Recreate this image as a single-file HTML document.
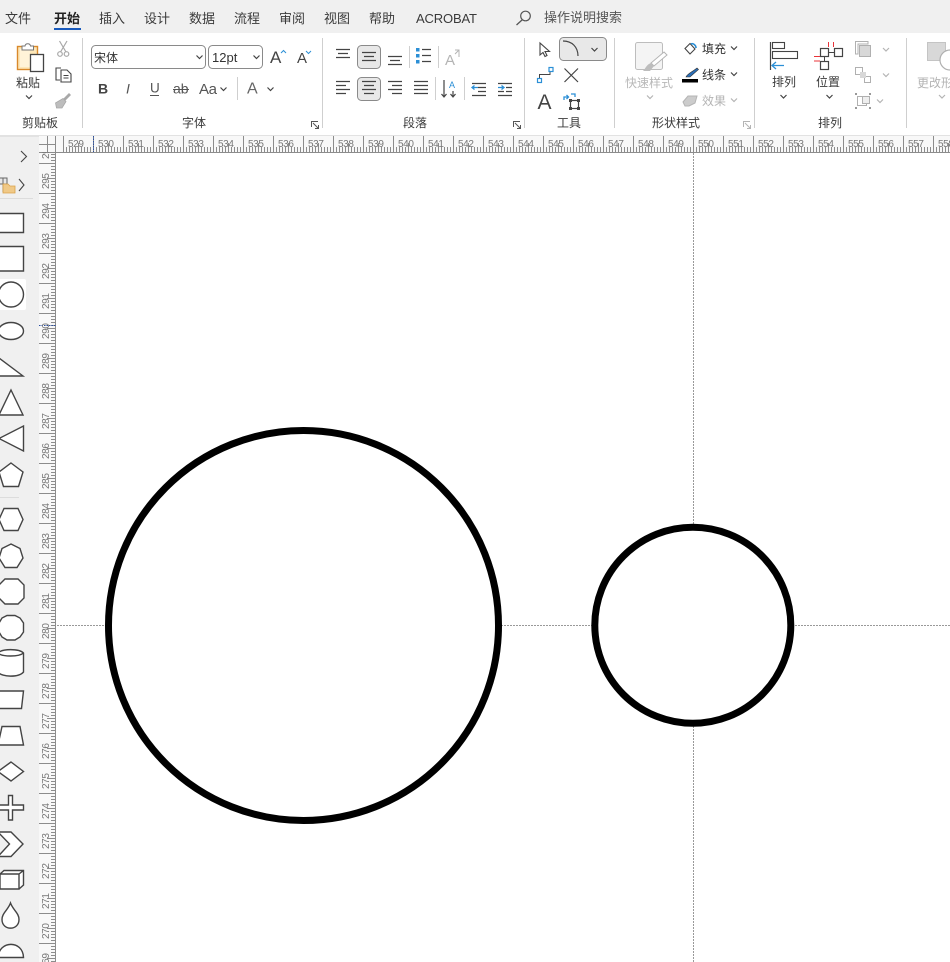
<!DOCTYPE html>
<html><head><meta charset="utf-8"><title>Visio</title>
<style>
html,body{margin:0;padding:0;background:#fff;width:950px;height:962px;overflow:hidden}
svg{display:block}
text{font-family:"Liberation Sans","Noto Sans CJK SC",sans-serif}
.t{font-size:13px;fill:#3a3a3a}
.g{font-size:12px;fill:#3a3a3a;text-anchor:middle}
.d{font-size:12px;fill:#b8b8b8;text-anchor:middle}
.r{font-size:10px;fill:#777;letter-spacing:-.4px}
.l{fill:none;stroke:#444;stroke-width:1.3}
.s{fill:#fff;stroke:#444;stroke-width:1.4}
.b{fill:none;stroke:#2b8fd6;stroke-width:1.3}
.q{fill:none;stroke:#b0b0b0;stroke-width:1.2}
</style></head><body>
<svg width="950" height="962" viewBox="0 0 950 962" xmlns="http://www.w3.org/2000/svg">
<defs>
<path id="ch" d="M-3 -1.5L0 1.5L3 -1.5" fill="none" stroke="#444" stroke-width="1.2"/>
<path id="cg" d="M-3 -1.5L0 1.5L3 -1.5" fill="none" stroke="#b4b4b4" stroke-width="1.2"/>
<pattern id="hr" width="30" height="16" patternUnits="userSpaceOnUse" patternTransform="translate(63 136)">
<path d="M0.5 0V16M3.5 11V16M6.5 11V16M9.5 11V16M12.5 11V16M15.5 7V16M18.5 11V16M21.5 11V16M24.5 11V16M27.5 11V16" stroke="#8c8c8c" stroke-width="1" fill="none"/>
</pattern>
<pattern id="vr" width="17" height="30" patternUnits="userSpaceOnUse" patternTransform="translate(39 643)">
<path d="M0 0.5H17M12 3.5H17M12 6.5H17M12 9.5H17M12 12.5H17M8 15.5H17M12 18.5H17M12 21.5H17M12 24.5H17M12 27.5H17" stroke="#8c8c8c" stroke-width="1" fill="none"/>
</pattern>
<clipPath id="vc"><rect x="39" y="152" width="17" height="810"/></clipPath>
</defs>

<rect width="950" height="962" fill="#fff"/>
<!-- tabs -->
<rect width="950" height="33" fill="#f0f0f0"/>
<text class="t" x="5" y="23">文件</text>
<text class="t" x="54" y="23" style="font-weight:700;fill:#222">开始</text>
<rect x="54" y="28" width="27" height="2" fill="#185abd"/>
<text class="t" x="99" y="23">插入</text>
<text class="t" x="144" y="23">设计</text>
<text class="t" x="189" y="23">数据</text>
<text class="t" x="234" y="23">流程</text>
<text class="t" x="279" y="23">审阅</text>
<text class="t" x="324" y="23">视图</text>
<text class="t" x="369" y="23">帮助</text>
<text class="t" x="416" y="23" textLength="61">ACROBAT</text>
<circle cx="525.5" cy="16" r="4.8" fill="none" stroke="#555" stroke-width="1.2"/>
<path d="M522 20L516.500 25" stroke="#555" stroke-width="1.3"/>
<text class="t" x="544" y="22" style="fill:#555">操作说明搜索</text>

<!-- ribbon -->
<rect x="0" y="135" width="950" height="2" fill="#e2e2e2"/>
<rect x="0" y="33" width="950" height="102" fill="#fff"/>
<g stroke="#cfcfcf" stroke-width="1">
<path d="M82.500 38V128M322.500 38V128M524.500 38V128M614.500 38V128M754.500 38V128M906.500 38V128M237.500 77V100M409.500 46V68M438.500 46V68M435.500 77V100M464.500 77V100"/>
</g>
<!-- group labels -->
<text class="g" x="40" y="127">剪贴板</text>
<text class="g" x="194" y="127">字体</text>
<text class="g" x="415" y="127">段落</text>
<text class="g" x="569" y="127">工具</text>
<text class="g" x="676" y="127">形状样式</text>
<text class="g" x="830" y="127">排列</text>
<g fill="none" stroke="#555" stroke-width="1">
<path d="M311.500 127V121.500H318M313 123L318.500 128.500M318.500 125V128.500H315"/>
<path d="M513.500 127V121.500H520M515 123L520.500 128.500M520.500 125V128.500H517"/>
</g>
<path d="M743.500 127V121.500H750M745 123L750.500 128.500M750.500 125V128.500H747" fill="none" stroke="#b4b4b4"/>

<!-- clipboard -->
<rect x="17.500" y="46.500" width="20" height="23" fill="#fde7b8" stroke="#d9892b" stroke-width="1.4"/>
<rect x="20" y="49" width="10" height="18" fill="#fff3d8"/>
<path d="M22 50V46H25C25.500 43 30 43 30.500 46H33.500V50Z" fill="#fff" stroke="#777" stroke-width="1"/>
<rect x="30.500" y="54.500" width="13" height="17" fill="#fff" stroke="#444" stroke-width="1.3"/>
<text class="g" x="28" y="87">粘贴</text>
<use href="#ch" x="29" y="97"/>
<!-- scissors -->
<g fill="none" stroke="#a8a8a8" stroke-width="1.2">
<path d="M59.500 41L66 52M67 41L60.500 52"/><circle cx="60" cy="54" r="2.300"/><circle cx="66.500" cy="54" r="2.300"/>
</g>
<!-- copy -->
<g fill="none" stroke="#444" stroke-width="1.1">
<path d="M61 68H56V80H60"/>
<path d="M61 70H67L71 74V82H61Z" fill="#fff"/><path d="M63.500 75.500H68.500M63.500 78H68.500"/>
</g>
<!-- brush -->
<path d="M69 93L71 95L65 101L63 99Z" fill="#a8a8a8"/>
<path d="M63 98.500L66 101.500L62 108H56.500L55.500 103Z" fill="#bdbdbd" stroke="#a8a8a8" stroke-width=".8"/>

<!-- font -->
<rect x="91.500" y="45.500" width="114" height="23" rx="4" fill="#fff" stroke="#8a8a8a"/>
<text x="94" y="62" style="font-size:12px;fill:#333">宋体</text>
<use href="#ch" x="199.500" y="57"/>
<rect x="208.500" y="45.500" width="54" height="23" rx="4" fill="#fff" stroke="#8a8a8a"/>
<text x="212" y="62" style="font-size:13px;fill:#333">12pt</text>
<use href="#ch" x="256.500" y="57"/>
<text x="270" y="63" style="font-size:17px;fill:#444">A</text>
<path d="M281 53L283.500 50.500L286 53" fill="none" stroke="#2b8fd6"/>
<text x="297" y="63" style="font-size:15px;fill:#444">A</text>
<path d="M306 51L308.500 53.500L311 51" fill="none" stroke="#2b8fd6"/>
<text x="98" y="93.500" style="font-size:14px;font-weight:700;fill:#444">B</text>
<text x="126" y="93.500" style="font-size:14px;font-style:italic;fill:#555">I</text>
<text x="150" y="92.500" style="font-size:13.500px;fill:#555">U</text>
<path d="M150 95.500H159" stroke="#555"/>
<text x="173" y="93.500" style="font-size:14px;fill:#555">ab</text>
<path d="M173 89.500H189" stroke="#555"/>
<text x="199" y="94" style="font-size:15px;fill:#555" textLength="18">Aa</text>
<use href="#ch" x="223.500" y="89"/>
<text x="247" y="93.500" style="font-size:16px;fill:#666">A</text>
<use href="#ch" x="270.500" y="89"/>

<!-- paragraph -->
<rect x="357.500" y="45.500" width="23" height="23" rx="4" fill="#e8e8e8" stroke="#8a8a8a"/>
<rect x="357.500" y="77.500" width="23" height="23" rx="4" fill="#e8e8e8" stroke="#8a8a8a"/>
<g fill="none" stroke="#444" stroke-width="1.2">
<path d="M336 49.500H350M338 53.500H348M336 57.500H350" transform="translate(0 0)"/>
<path d="M362 52.500H376M364 56.500H374M362 60.500H376"/>
<path d="M388 56.500H402M390 60.500H400M388 64.500H402"/>
<path d="M336 81.500H350M336 85.500H346M336 89.500H350M336 93.500H346"/>
<path d="M362 81.500H376M364 85.500H374M362 89.500H376M364 93.500H374"/>
<path d="M388 81.500H402M392 85.500H402M388 89.500H402M392 93.500H402"/>
<path d="M414 81.500H428M414 85.500H428M414 89.500H428M414 93.500H428"/>
<path d="M422 49.500H431M422 55.500H431M422 61.500H431"/>
<path d="M444 80V97M441.500 94L444 97L446.500 94M453 91V97M450.500 94L453 97L455.500 94"/>
<path d="M472 83.500H486M478 87.500H486M478 91.500H486M472 95.500H486"/>
<path d="M498 83.500H512M498 91.500H504M506 87.500H512M506 91.500H512M498 95.500H512"/>
</g>
<rect x="416" y="48" width="3.500" height="3.500" fill="#2b8fd6"/><rect x="416" y="54" width="3.500" height="3.500" fill="#2b8fd6"/><rect x="416" y="60" width="3.500" height="3.500" fill="#2b8fd6"/>
<text x="445" y="65" style="font-size:15px;fill:#b4b4b4">A</text>
<path d="M459 57V50H455M459 50L455 54" fill="none" stroke="#b4b4b4"/>
<text x="449" y="88" style="font-size:9px;fill:#2b8fd6">A</text>
<path d="M472 87.500H478M474.500 85.500L472 87.500L474.500 89.500" class="b"/>
<path d="M498 87.500H504M501.500 85.500L504 87.500L501.500 89.500" class="b"/>

<!-- tools -->
<path d="M540 43V55L543 52.500L545 56.500L547 55.500L545 51.500H549.500Z" fill="#fff" stroke="#444" stroke-width="1.1"/>
<rect x="559.500" y="37.500" width="47" height="23" rx="4" fill="#e8e8e8" stroke="#8a8a8a"/>
<path d="M563 41C572 41 578 47 578 56" fill="none" stroke="#444" stroke-width="1.2"/>
<use href="#ch" x="594.500" y="49.500"/>
<path d="M539.500 79V74.500H550V70" fill="none" stroke="#444"/>
<rect x="537.500" y="78.500" width="4" height="4" fill="#fff" stroke="#2b8fd6" stroke-width="1.2"/>
<rect x="549" y="67.500" width="4" height="4" fill="#fff" stroke="#2b8fd6" stroke-width="1.2"/>
<path d="M564.500 68.500L578 82M578 68.500L564.500 82" stroke="#444" stroke-width="1.2" fill="none"/>
<text x="537.500" y="109" style="font-size:21px;fill:#444">A</text>
<rect x="570.500" y="100.500" width="8" height="8" fill="none" stroke="#444" stroke-width="1.2"/>
<path d="M569 99h3v3h-3zM577 99h3v3h-3zM569 107h3v3h-3zM577 107h3v3h-3z" fill="#444"/>
<path d="M564 100V97H568M566.500 95L568.500 97L566.500 99M571 94H575V97" class="b" stroke-width="1.1"/>

<!-- quick styles -->
<rect x="635.500" y="42.500" width="27" height="27" rx="2" fill="#f4f4f4" stroke="#bdbdbd"/>
<path d="M664 52L667 55L654 66L651 63Z" fill="#fff" stroke="#b4b4b4"/>
<path d="M651 63L654 66L650 71H643C646 68 646 65 651 63Z" fill="#bdbdbd"/>
<text class="d" x="649" y="87">快速样式</text>
<use href="#cg" x="650" y="97"/>

<!-- fill line effect -->
<path d="M685 48.500L690 43.500L695 49L690 54Z" fill="#fff" stroke="#444" stroke-width="1.1"/>
<path d="M691 44C693 43 696 45 696 48" fill="none" stroke="#2b8fd6" stroke-width="1.6"/>
<text x="702" y="53" style="font-size:12px;fill:#333">填充</text>
<use href="#ch" x="734" y="48"/>
<path d="M697 68L698.500 69.500L690 77H686C687 74 692 72 697 68Z" fill="#2b6fb8" stroke="#333" stroke-width=".6"/>
<rect x="682" y="79" width="16" height="3.500" fill="#000"/>
<text x="702" y="79" style="font-size:12px;fill:#333">线条</text>
<use href="#ch" x="734" y="74"/>
<path d="M683 102L688 96H697L695 103L689 106H685Z" fill="#ccc" stroke="#b4b4b4"/>
<text x="702" y="105" style="font-size:12px;fill:#b4b4b4">效果</text>
<use href="#cg" x="734" y="100"/>

<!-- arrange -->
<path d="M770.500 42V70" stroke="#444" stroke-width="1.2"/>
<rect x="772.500" y="42.500" width="12" height="6" fill="#fff" stroke="#444" stroke-width="1.1"/>
<rect x="772.500" y="51.500" width="25" height="7" fill="#fff" stroke="#444" stroke-width="1.1"/>
<path d="M772 65.500H784M776 62L772 65.500L776 69" class="b"/>
<text class="g" x="784" y="86">排列</text>
<use href="#ch" x="783.500" y="96.500"/>
<g fill="#fff" stroke="#444" stroke-width="1.2">
<rect x="820.500" y="48.500" width="8" height="8"/><rect x="834.500" y="48.500" width="8" height="8"/><rect x="820.500" y="61.500" width="8" height="8"/>
</g>
<path d="M828.500 52.500H834.500M824.500 56.500V61.500" stroke="#444" fill="none"/>
<path d="M828.500 42V47M833.500 42V47M814 56.500H820M814 61H820" stroke="#e8343a" fill="none"/>
<text class="g" x="828" y="86">位置</text>
<use href="#ch" x="829.500" y="96.500"/>
<g fill="#eee" stroke="#b0b0b0" stroke-width="1">
<path d="M855.500 41.500H868V44H858V54H855.500Z" fill="#fff"/>
<rect x="859.500" y="45.500" width="11" height="11" fill="#d8d8d8"/>
<rect x="855.500" y="67.500" width="7" height="7" fill="#fff"/><rect x="864.500" y="76.500" width="6" height="6" fill="#fff"/>
<rect x="860" y="72" width="6" height="6" fill="#d8d8d8" stroke="none"/>
<rect x="857.500" y="96.500" width="9" height="9" fill="#fff"/>
<rect x="862.500" y="96.500" width="7" height="7" fill="#eee"/>
</g>
<path d="M855 93h2v2h-2zM869 93h2v2h-2zM855 107h2v2h-2zM869 107h2v2h-2z" fill="#999"/>
<use href="#cg" x="886" y="49.500"/>
<use href="#cg" x="886" y="75"/>
<use href="#cg" x="880" y="101"/>
<rect x="927.500" y="42.500" width="18" height="18" fill="#d8d8d8" stroke="#c4c4c4"/>
<circle cx="950" cy="60" r="10" fill="#fff" stroke="#b0b0b0" stroke-width="1.2"/>
<text x="917" y="87" style="font-size:12px;fill:#b4b4b4">更改形</text>
<use href="#cg" x="942" y="96.500"/>

<!-- shape panel -->
<rect x="0" y="137" width="39" height="825" fill="#f0f0f0"/>
<path d="M21 151L26.500 156.500L21 162" fill="none" stroke="#444" stroke-width="1.1"/>
<path d="M19 179L24 185L19 191" fill="none" stroke="#444" stroke-width="1.1"/>
<path d="M0 178H7V184H0M3 178V192" fill="#e8e8e8" stroke="#666"/>
<path d="M3 184H8L10 186H15V193H3Z" fill="#f0c987" stroke="#d9a24a" stroke-width=".8"/>
<path d="M0 198.500H33" stroke="#dcdcdc"/>
<path d="M0 497.500H19" stroke="#dcdcdc"/>
<rect x="-3" y="279" width="29" height="31" rx="2" fill="#fff"/>
<g class="s">
<path d="M-2 213.500H23.500V232.500H-2"/>
<path d="M-2 246.500H23.500V271H-2"/>
<circle cx="11" cy="294.500" r="12.500"/>
<ellipse cx="11" cy="331" rx="12.500" ry="8.500"/>
<path d="M-1 358L23 376H-1Z"/>
<path d="M11 390L23 415H-1Z"/>
<path d="M23.500 426V451L-1 438.500Z"/>
<path d="M11 463L23 472L18.500 486.500H3.500L-1 472Z"/>
<path d="M4 508.500H18L23 519.500L18 530.500H4L-1 519.500Z"/>
<path d="M11 544L20 548.500L23 558L17 567.500H5L-1 558L2 548.500Z"/>
<path d="M5 579H18L24 585V598L18 604H5L-1 598V585Z"/>
<path d="M7 615.500H15L20 618L23.500 623V632L20 637L15 640H7L2 637L-1 632V623L2 618Z"/>
<path d="M-2 653V672C2 677.500 19 677.500 23.500 672V653C19 648.500 2 648.500 -2 653Z"/>
<path d="M-2 653C2 657 19 657 23.500 653" fill="none"/>
<path d="M-1 691H23.500L21.500 708.500H-3Z"/>
<path d="M2 726.500H20L23.500 745H-2Z"/>
<path d="M11 762L23.500 771.500L11 781L-2 771.500Z"/>
<path d="M8.500 795.500H12.500V805H23.500V810H12.500V820H8.500V810H-2V805H8.500Z"/>
<path d="M-2 832H11L23 844L11 856.500H-2L9.500 844Z"/>
<path d="M0 874H19V889H0ZM0 874L4 870.500H23.500V885L19 889M19 874L23.500 870.500"/>
<path d="M10.500 903C13 910 19 913 19 919.500C19 931 2 931 2 919.500C2 913 8 910 10.500 903Z"/>
<path d="M-2 957.500C-1 940 23 940 23.500 957.500Z"/>
</g>

<!-- rulers -->
<rect x="39" y="136" width="911" height="16" fill="#f8f8f8"/>
<rect x="39" y="136" width="17" height="826" fill="#f8f8f8"/>
<rect x="63" y="136" width="887" height="16" fill="url(#hr)"/>
<rect x="39" y="152" width="17" height="810" fill="url(#vr)"/>
<path d="M39 152.500H950" stroke="#8c8c8c"/>
<path d="M55.500 136V962" stroke="#8c8c8c"/>
<path d="M39 144.500H56M47.500 136V152" stroke="#8c8c8c"/>
<path d="M93.500 136V152" stroke="#2a4fa0" stroke-dasharray="1.500 1"/>
<path d="M39 325.500H56" stroke="#2a4fa0" stroke-dasharray="1.500 1"/>
<g transform="translate(1 0)">
<text class="r" x="67" y="147">529</text><text class="r" x="97" y="147">530</text><text class="r" x="127" y="147">531</text><text class="r" x="157" y="147">532</text><text class="r" x="187" y="147">533</text><text class="r" x="217" y="147">534</text><text class="r" x="247" y="147">535</text><text class="r" x="277" y="147">536</text><text class="r" x="307" y="147">537</text><text class="r" x="337" y="147">538</text><text class="r" x="367" y="147">539</text><text class="r" x="397" y="147">540</text><text class="r" x="427" y="147">541</text><text class="r" x="457" y="147">542</text><text class="r" x="487" y="147">543</text><text class="r" x="517" y="147">544</text><text class="r" x="547" y="147">545</text><text class="r" x="577" y="147">546</text><text class="r" x="607" y="147">547</text><text class="r" x="637" y="147">548</text><text class="r" x="667" y="147">549</text><text class="r" x="697" y="147">550</text><text class="r" x="727" y="147">551</text><text class="r" x="757" y="147">552</text><text class="r" x="787" y="147">553</text><text class="r" x="817" y="147">554</text><text class="r" x="847" y="147">555</text><text class="r" x="877" y="147">556</text><text class="r" x="907" y="147">557</text><text class="r" x="937" y="147">558</text>
</g>
<g clip-path="url(#vc)">
<text class="r" transform="translate(49 159) rotate(-90)">296</text>
<text class="r" transform="translate(49 189) rotate(-90)">295</text>
<text class="r" transform="translate(49 219) rotate(-90)">294</text>
<text class="r" transform="translate(49 249) rotate(-90)">293</text>
<text class="r" transform="translate(49 279) rotate(-90)">292</text>
<text class="r" transform="translate(49 309) rotate(-90)">291</text>
<text class="r" transform="translate(49 339) rotate(-90)">290</text>
<text class="r" transform="translate(49 369) rotate(-90)">289</text>
<text class="r" transform="translate(49 399) rotate(-90)">288</text>
<text class="r" transform="translate(49 429) rotate(-90)">287</text>
<text class="r" transform="translate(49 459) rotate(-90)">286</text>
<text class="r" transform="translate(49 489) rotate(-90)">285</text>
<text class="r" transform="translate(49 519) rotate(-90)">284</text>
<text class="r" transform="translate(49 549) rotate(-90)">283</text>
<text class="r" transform="translate(49 579) rotate(-90)">282</text>
<text class="r" transform="translate(49 609) rotate(-90)">281</text>
<text class="r" transform="translate(49 639) rotate(-90)">280</text>
<text class="r" transform="translate(49 669) rotate(-90)">279</text>
<text class="r" transform="translate(49 699) rotate(-90)">278</text>
<text class="r" transform="translate(49 729) rotate(-90)">277</text>
<text class="r" transform="translate(49 759) rotate(-90)">276</text>
<text class="r" transform="translate(49 789) rotate(-90)">275</text>
<text class="r" transform="translate(49 819) rotate(-90)">274</text>
<text class="r" transform="translate(49 849) rotate(-90)">273</text>
<text class="r" transform="translate(49 879) rotate(-90)">272</text>
<text class="r" transform="translate(49 909) rotate(-90)">271</text>
<text class="r" transform="translate(49 939) rotate(-90)">270</text>
<text class="r" transform="translate(49 969) rotate(-90)">269</text>
</g>

<!-- guides -->
<path d="M693.500 153V962" stroke="#999" stroke-dasharray="2 1"/>
<path d="M57 625.500H950" stroke="#999" stroke-dasharray="2 1"/>

<!-- circles -->
<circle cx="303.500" cy="625.500" r="195" fill="#fff" stroke="#000" stroke-width="7"/>
<circle cx="692.800" cy="625.300" r="98" fill="#fff" stroke="#000" stroke-width="7"/>
</svg>
</body></html>
